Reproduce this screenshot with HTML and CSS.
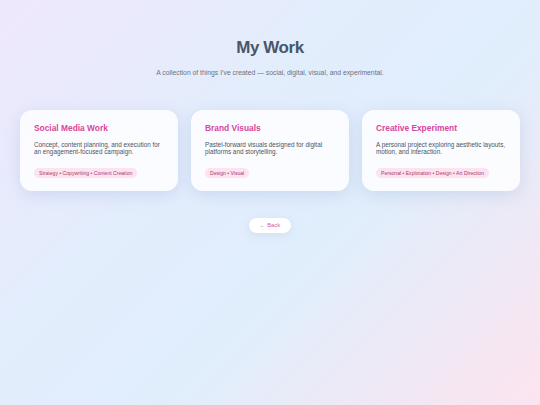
FILE: index.html
```html
<!DOCTYPE html>
<html lang="en">
<head>
<meta charset="utf-8">
<title>My Work</title>
<link rel="stylesheet" href="styles.css">
</head>
<body>
<main class="page">
  <header class="intro">
    <h1 class="title">My Work</h1>
    <p class="subtitle">A collection of things I’ve created — social, digital, visual, and experimental.</p>
  </header>
  <section class="cards">
    <article class="card">
      <h2 class="card-title">Social Media Work</h2>
      <p class="card-text">Concept, content planning, and execution for an engagement-focused campaign.</p>
      <span class="tag">Strategy • Copywriting • Content Creation</span>
    </article>
    <article class="card">
      <h2 class="card-title">Brand Visuals</h2>
      <p class="card-text">Pastel-forward visuals designed for digital platforms and storytelling.</p>
      <span class="tag">Design • Visual</span>
    </article>
    <article class="card">
      <h2 class="card-title">Creative Experiment</h2>
      <p class="card-text">A personal project exploring aesthetic layouts, motion, and interaction.</p>
      <span class="tag">Personal • Exploration • Design • Art Direction</span>
    </article>
  </section>
  <div class="actions">
    <a class="back" href="#">← Back</a>
  </div>
</main>
</body>
</html>
```

FILE: styles.css
```css
* { box-sizing: border-box; }
html, body { margin: 0; padding: 0; }
body {
  min-height: 405px;
  font-family: "Liberation Sans", Arial, sans-serif;
  background: linear-gradient(135deg, #efe8fd 0%, #e3edfc 35%, #e0eefc 60%, #fce4ef 100%);
  color: #4b5563;
}
.page {
  width: 500px;
  margin: 0 auto;
  padding-top: 38px;
}
.intro { text-align: center; }
.title {
  margin: 0;
  font-size: 17px;
  line-height: 20px;
  font-weight: 700;
  letter-spacing: -0.4px;
  color: #4a5568;
}
.subtitle {
  margin: 11px 0 0;
  font-size: 6.8px;
  line-height: 8px;
  color: #6b7280;
}
.cards {
  margin-top: 33px;
  display: grid;
  grid-template-columns: repeat(3, 1fr);
  gap: 13px;
}
.card {
  display: flex;
  flex-direction: column;
  align-items: flex-start;
  background: rgba(255, 255, 255, 0.82);
  border-radius: 12px;
  padding: 13px 13px 13px 14px;
  height: 81px;
  box-shadow: 0 4px 16px rgba(140, 160, 205, 0.26);
}
.card-title {
  margin: 0;
  font-size: 8.4px;
  line-height: 10px;
  font-weight: 700;
  color: #d6479a;
}
.card-text {
  margin: 7.5px 0 0;
  font-size: 6.35px;
  line-height: 7.7px;
  color: #4b5563;
}
.tag {
  display: block;
  margin-top: 12px;
  padding: 0 5px;
  height: 10px;
  line-height: 10px;
  border-radius: 5px;
  background: #fde3ef;
  color: #a83a6d;
  font-size: 5.1px;
  white-space: nowrap;
}
.actions {
  margin-top: 27px;
  display: flex;
  justify-content: center;
}
.back {
  display: inline-block;
  width: 42px;
  height: 15px;
  line-height: 15px;
  text-align: center;
  border-radius: 8px;
  background: #ffffff;
  color: #e05aa3;
  font-size: 5.8px;
  text-decoration: none;
  box-shadow: 0 2px 8px rgba(150, 170, 210, 0.22);
}
```
